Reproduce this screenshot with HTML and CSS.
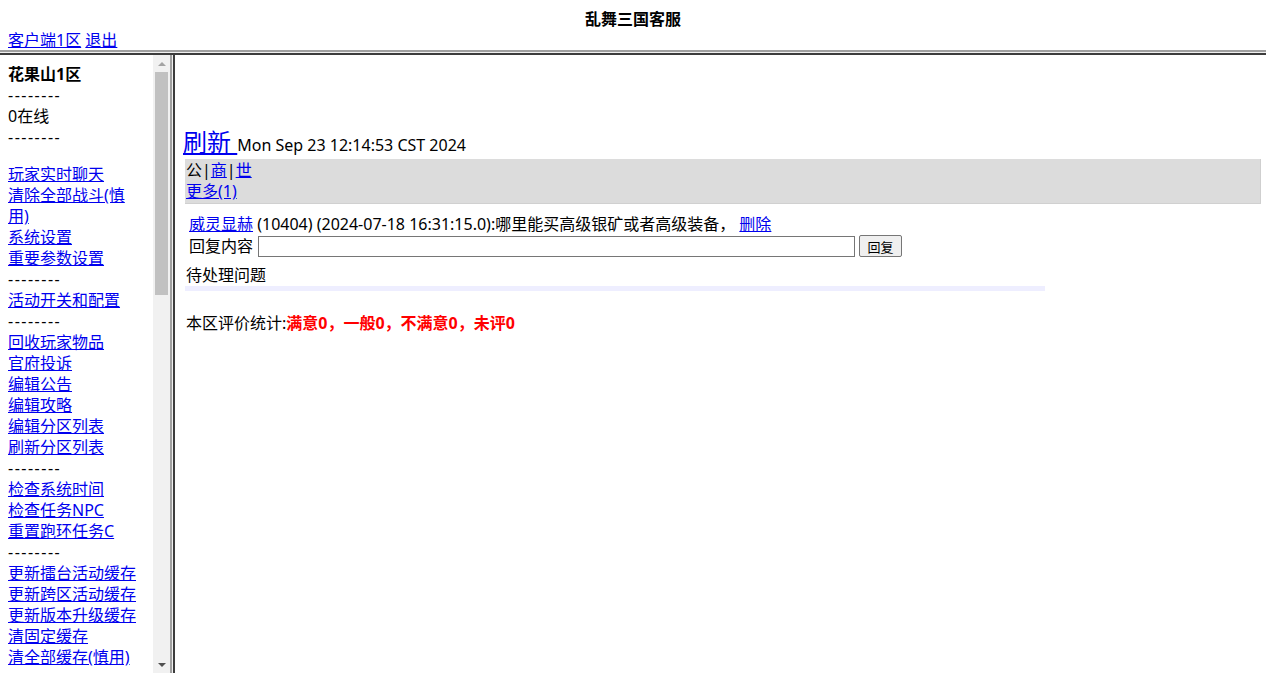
FILE: index.html
```html
<!DOCTYPE html>
<html lang="zh-CN">
<head>
    <meta charset="UTF-8">
    <meta name="viewport" content="width=device-width, initial-scale=1.0">
    <title>乱舞三国客服</title>
    <link rel="stylesheet" href="styles.css">
</head>
<body>
    <div class="top">
        <div class="title">乱舞三国客服</div>
        <div class="top-links"><a href="#">客户端1区</a> <a href="#">退出</a></div>
    </div>
    <div class="hsplit"></div>

    <div class="frames">
        <div class="side">
            <div class="side-body">
                <b>花果山1区</b><br>
                <span class="sep">--------</span><br>
                0在线<br>
                <span class="sep">--------</span><br>
                <div class="gap"></div>
                <a href="#">玩家实时聊天</a><br>
                <a href="#">清除全部战斗(慎用)</a><br>
                <a href="#">系统设置</a><br>
                <a href="#">重要参数设置</a><br>
                <span class="sep">--------</span><br>
                <a href="#">活动开关和配置</a><br>
                <span class="sep">--------</span><br>
                <a href="#">回收玩家物品</a><br>
                <a href="#">官府投诉</a><br>
                <a href="#">编辑公告</a><br>
                <a href="#">编辑攻略</a><br>
                <a href="#">编辑分区列表</a><br>
                <a href="#">刷新分区列表</a><br>
                <span class="sep">--------</span><br>
                <a href="#">检查系统时间</a><br>
                <a href="#">检查任务NPC</a><br>
                <a href="#">重置跑环任务C</a><br>
                <span class="sep">--------</span><br>
                <a href="#">更新擂台活动缓存</a><br>
                <a href="#">更新跨区活动缓存</a><br>
                <a href="#">更新版本升级缓存</a><br>
                <a href="#">清固定缓存</a><br>
                <a href="#">清全部缓存(慎用)</a>
            </div>
            <div class="scrollbar">
                <div class="sb-btn"><span class="arrow-up"></span></div>
                <div class="sb-thumb"></div>
                <div class="sb-track"></div>
                <div class="sb-btn"><span class="arrow-down"></span></div>
            </div>
        </div>
        <div class="vsplit"></div>

        <div class="main">
            <div class="refresh"><a href="#" class="big">刷新 </a>Mon Sep 23 12:14:53 CST 2024</div>
            <div class="channels">
                公|<a href="#">商</a>|<a href="#">世</a><br>
                <a href="#">更多(1)</a>
            </div>
            <div class="message">
                <a href="#">威灵显赫</a> (10404) (2024-07-18 16:31:15.0):哪里能买高级银矿或者高级装备，
                <a href="#">删除</a>
            </div>
            <form class="reply">
                <label>回复内容</label>
                <input type="text" class="reply-input">
                <button type="button" class="reply-btn">回复</button>
            </form>
            <div class="pending">待处理问题</div>
            <div class="pending-bar"></div>
            <div class="stats">本区评价统计:<b class="red">满意0，一般0，不满意0，未评0</b></div>
        </div>
    </div>
</body>
</html>
```

FILE: styles.css
```css
html, body {
    margin: 0;
    padding: 0;
    height: 100%;
    overflow: hidden;
}
body {
    font-family: "Noto Sans", "Noto Sans CJK SC", sans-serif;
    font-size: 16px;
    line-height: 21px;
    color: #000;
    display: flex;
    flex-direction: column;
}
a {
    color: #0000ee;
}

/* top frame */
.top {
    height: 50px;
    box-sizing: border-box;
    padding: 9px 8px 0;
    overflow: hidden;
}
.title {
    text-align: center;
    font-weight: bold;
}

/* frame borders */
.hsplit {
    height: 1px;
    border-top: 2px solid #a0a0a0;
    border-bottom: 2px solid #3c3c3c;
    background: #f0f0f0;
}
.vsplit {
    width: 1px;
    border-left: 2px solid #a0a0a0;
    border-right: 2px solid #3c3c3c;
    background: #f0f0f0;
}

.frames {
    flex: 1;
    display: flex;
    min-height: 0;
}

/* left frame */
.side {
    width: 170px;
    display: flex;
}
.side-body {
    width: 153px;
    box-sizing: border-box;
    padding: 9px 8px 8px;
    overflow: hidden;
}
.sep {
    letter-spacing: 1.5px;
}
.gap {
    height: 16px;
}
.scrollbar {
    width: 17px;
    background: #f1f1f1;
    display: flex;
    flex-direction: column;
}
.sb-btn {
    height: 17px;
    display: flex;
    justify-content: center;
    align-items: center;
}
.arrow-up {
    border-left: 4px solid transparent;
    border-right: 4px solid transparent;
    border-bottom: 4px solid #a3a3a3;
}
.arrow-down {
    border-left: 4px solid transparent;
    border-right: 4px solid transparent;
    border-top: 4px solid #505050;
}
.sb-thumb {
    height: 223px;
    margin: 0 2px;
    background: #c1c1c1;
}
.sb-track {
    flex: 1;
}

/* right frame */
.main {
    flex: 1;
    padding: 8px;
    overflow: hidden;
}
.refresh {
    margin-top: 65px;
    line-height: 28px;
}
.big {
    font-size: 24px;
}
.channels {
    background: #dcdcdc;
    margin: 0 -3px 0 2px;
    padding: 1px;
    border-right: 1px solid #cfcfcf;
    border-bottom: 1px solid #d0d0d0;
}
.message {
    margin-top: 10px;
    padding-left: 6px;
}
.reply {
    margin: 0;
    padding-left: 6px;
    display: flex;
    align-items: center;
    height: 22px;
}
.reply label {
    margin-right: 5px;
}
.reply-input {
    width: 597px;
    height: 21px;
    box-sizing: border-box;
    border: 1px solid #767676;
    padding: 1px 2px;
    margin: 0 4px 0 0;
}
.reply-btn {
    width: 43px;
    height: 22px;
    font-family: "Noto Sans CJK SC", sans-serif;
    font-size: 13px;
    padding: 0;
    background: #efefef;
    border: 1px solid #767676;
    border-radius: 2px;
}
.pending {
    margin-top: 8px;
    padding-left: 3px;
}
.pending-bar {
    width: 860px;
    height: 5px;
    margin-left: 2px;
    background: #eeeeff;
}
.stats {
    margin-top: 22px;
    padding-left: 3px;
}
.red {
    color: #ff0000;
}
```
